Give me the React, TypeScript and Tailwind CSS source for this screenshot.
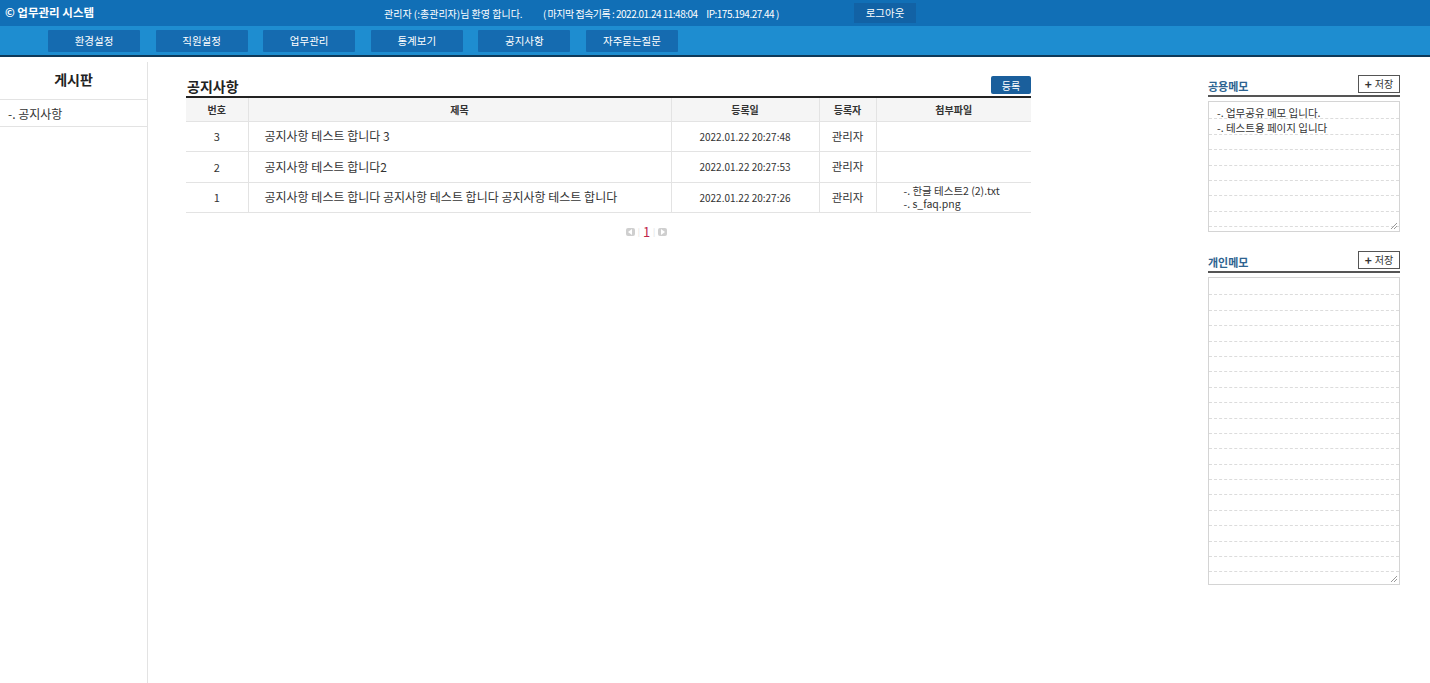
import React from "react";

const navItems = ["환경설정", "직원설정", "업무관리", "통계보기", "공지사항", "자주묻는질문"];

const rows = [
  { no: "3", title: "공지사항 테스트 합니다 3", date: "2022.01.22 20:27:48", user: "관리자", files: [] as string[] },
  { no: "2", title: "공지사항 테스트 합니다2", date: "2022.01.22 20:27:53", user: "관리자", files: [] as string[] },
  {
    no: "1",
    title: "공지사항 테스트 합니다 공지사항 테스트 합니다 공지사항 테스트 합니다",
    date: "2022.01.22 20:27:26",
    user: "관리자",
    files: ["-. 한글 테스트2 (2).txt", "-. s_faq.png"],
  },
];

function Memo({ title, lines, height, count }: { title: string; lines: string[]; height: string; count: number }) {
  return (
    <div>
      <div className="flex items-end justify-between h-[22px] border-b-2 border-[#555]">
        <span className="text-[11px] font-semibold text-[#2d6390] mb-[1px]">{title}</span>
        <button className="mb-[2px] h-[18px] w-[42px] border border-[#555] bg-white text-[10px] text-[#333] flex items-center justify-center gap-[3px] leading-none">
          <span className="font-bold text-[12px] leading-none">+</span>
          <span>저장</span>
        </button>
      </div>
      <div className={`relative mt-[4px] ${height} border border-[#d4d4d4] overflow-hidden`}>
        <div className="pt-[2px]">
          {Array.from({ length: count }).map((_, i) => (
            <div key={i} className="h-[15.4px] border-b border-dashed border-[#dcdcdc] text-[10.5px] leading-[17px] text-[#333] pl-[8px]">
              {lines[i] ?? ""}
            </div>
          ))}
        </div>
        <svg className="absolute right-[1px] bottom-[1px]" width="8" height="8" viewBox="0 0 8 8">
          <path d="M7 1 L1 7 M7 4 L4 7" stroke="#999" strokeWidth="1" />
        </svg>
      </div>
    </div>
  );
}

export default function App() {
  return (
    <div className="w-[1430px] h-[683px] bg-white overflow-hidden font-['Noto_Sans_CJK_KR','Noto_Sans',sans-serif] text-[#333]">
      {/* Top bar */}
      <div className="h-[26px] bg-[#116fb6] flex items-center text-white">
        <div className="w-[384px] pl-[5px] text-[11.5px] font-bold">© 업무관리 시스템</div>
        <div className="text-[10px] w-[159px]">관리자 (:총관리자)님 환영 합니다.</div>
        <div className="text-[10px] tracking-[-0.5px] w-[311px]">( 마지막 접속기록 : 2022.01.24 11:48:04 &nbsp;&nbsp;&nbsp; IP:175.194.27.44 )</div>
        <button className="h-[20px] w-[62px] bg-[#1262a5] text-[10.5px] text-white">로그아웃</button>
      </div>
      {/* Nav */}
      <div className="h-[31px] bg-[#1e8dd0] border-b-2 border-[#0e3a5a] flex items-center pl-[48px] gap-[15.6px]">
        {navItems.map((n) => (
          <div key={n} className="h-[22px] w-[92px] bg-[#156bb0] rounded-[1px] text-white text-[10.5px] flex items-center justify-center">
            {n}
          </div>
        ))}
      </div>
      {/* Body */}
      <div className="flex">
        {/* Sidebar */}
        <div className="w-[148px] pt-[5px]">
          <div className="border-r border-[#e3e3e3] h-[621px]">
            <div className="h-[38px] pb-[2px] flex items-center justify-center text-[14px] font-bold text-[#222] border-b border-[#e3e3e3]">게시판</div>
            <div className="h-[27px] pt-[1px] flex items-center pl-[8px] text-[12px] border-b border-[#e3e3e3]">-. 공지사항</div>
          </div>
        </div>
        {/* Main */}
        <div className="w-[883px] pl-[38px] pt-[19px]">
          <div className="flex items-end justify-between h-[20px]">
            <span className="text-[14px] font-bold text-[#222] leading-[20px] pl-[1px]">공지사항</span>
            <button className="h-[18px] w-[40px] mb-[2px] bg-[#1a5f9c] text-white text-[10px] rounded-[2px]">등록</button>
          </div>
          <table className="w-[845px] border-t-2 border-[#222] border-collapse text-[11px]">
            <colgroup>
              <col className="w-[62px]" />
              <col className="w-[423px]" />
              <col className="w-[148px]" />
              <col className="w-[57px]" />
              <col className="w-[155px]" />
            </colgroup>
            <thead>
              <tr className="h-[24px] bg-[#f5f5f5] text-[10px] text-[#333]">
                <th className="font-semibold border-b border-[#e3e3e3]">번호</th>
                <th className="font-semibold border-b border-l border-[#e3e3e3]">제목</th>
                <th className="font-semibold border-b border-l border-[#e3e3e3]">등록일</th>
                <th className="font-semibold border-b border-l border-[#e3e3e3]">등록자</th>
                <th className="font-semibold border-b border-l border-[#e3e3e3]">첨부파일</th>
              </tr>
            </thead>
            <tbody>
              {rows.map((r) => (
                <tr key={r.no} className="h-[30.5px]">
                  <td className="text-center text-[11px] border-b border-[#e3e3e3]">{r.no}</td>
                  <td className="pl-[16px] text-[12px] border-b border-l border-[#e3e3e3]">{r.title}</td>
                  <td className="text-center text-[10px] border-b border-l border-[#e3e3e3]">{r.date}</td>
                  <td className="text-center text-[11.5px] border-b border-l border-[#e3e3e3]">{r.user}</td>
                  <td className="pl-[27px] text-[10.5px] leading-[13px] border-b border-l border-[#e3e3e3]">
                    {r.files.map((f) => (
                      <div key={f}>{f}</div>
                    ))}
                  </td>
                </tr>
              ))}
            </tbody>
          </table>
          <div className="flex items-center justify-center gap-[3px] mt-[12px] w-[845px] pl-[76px]">
            <span className="h-[8px] w-[9px] rounded-[2px] bg-[#cfcfcf] flex items-center justify-center">
              <svg width="5" height="6" viewBox="0 0 5 6"><path d="M4 0 L0 3 L4 6Z" fill="#fff" /></svg>
            </span>
            <span className="text-[#ddd] text-[8px]">|</span>
            <span className="text-[13px] text-[#c0254a] leading-none">1</span>
            <span className="text-[#ddd] text-[8px]">|</span>
            <span className="h-[8px] w-[9px] rounded-[2px] bg-[#cfcfcf] flex items-center justify-center">
              <svg width="5" height="6" viewBox="0 0 5 6"><path d="M1 0 L5 3 L1 6Z" fill="#fff" /></svg>
            </span>
          </div>
        </div>
        <div className="flex-1" />
        {/* Right */}
        <div className="w-[192px] mr-[30px] pt-[18px] flex flex-col gap-[19px]">
          <Memo title="공용메모" lines={["-. 업무공유 메모 입니다.", "-. 테스트용 페이지 입니다"]} height="h-[131px]" count={9} />
          <Memo title="개인메모" lines={[]} height="h-[308px]" count={20} />
        </div>
      </div>
    </div>
  );
}
